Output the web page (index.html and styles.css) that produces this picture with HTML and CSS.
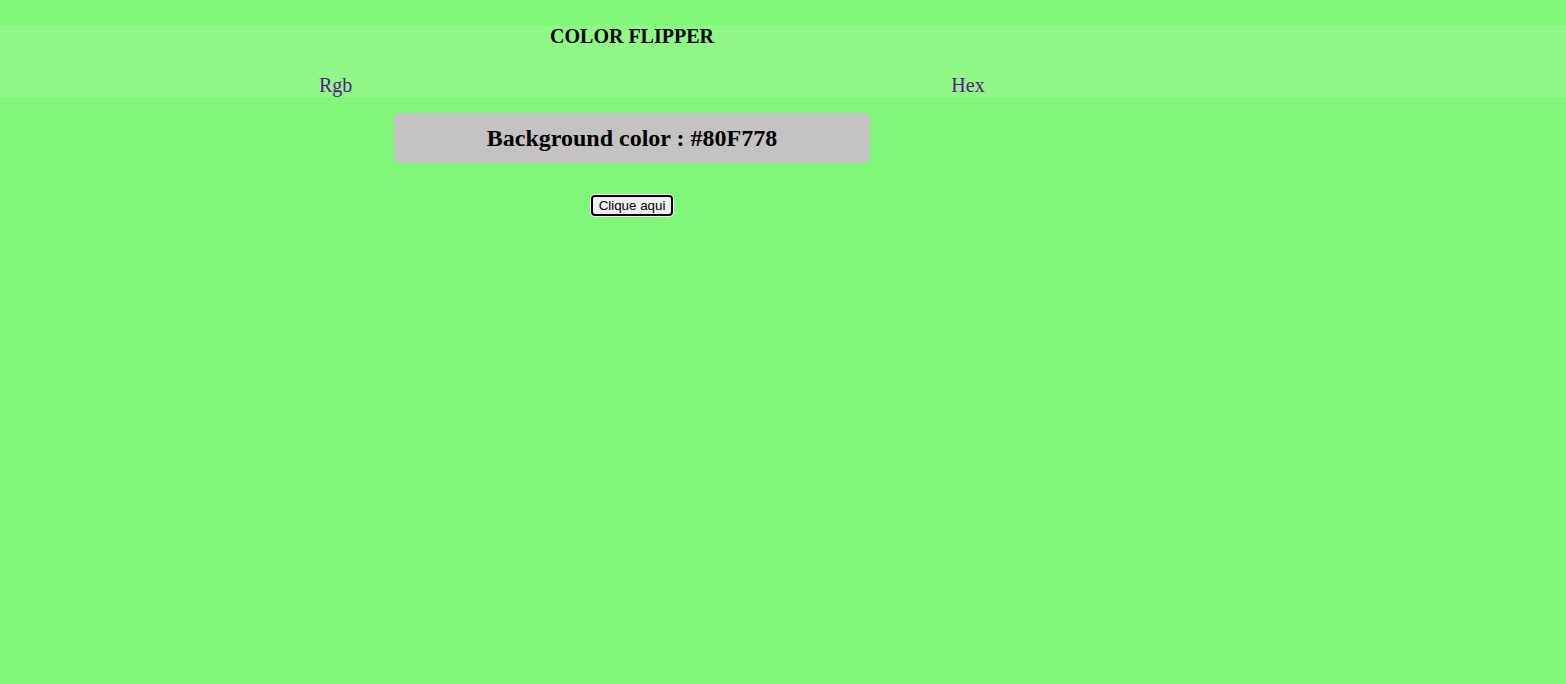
FILE: index.html
```html
<!DOCTYPE html>
<html lang="pt">
<head>
<meta charset="utf-8">
<title>Color Flipper</title>
<link rel="stylesheet" href="styles.css">
</head>
<body>
<header class="header">
  <h1 class="title">COLOR FLIPPER</h1>
  <nav class="nav">
    <a class="nav-link" href="#">Rgb</a>
    <a class="nav-link" href="#">Hex</a>
  </nav>
</header>
<main class="main">
  <div class="card">
    <h2 class="card-text">Background color : <span class="hex">#80F778</span></h2>
  </div>
  <div class="actions">
    <button class="btn" type="button">Clique aqui</button>
  </div>
</main>
</body>
</html>
```
FILE: styles.css
```css
html, body {
  margin: 0;
  padding: 0;
}
body {
  background: #80f778;
  font-family: "Liberation Serif", "Times New Roman", serif;
  min-height: 684px;
  padding-top: 25px;
  box-sizing: border-box;
}
.header {
  background: #8ff886;
  display: flex;
  flex-direction: column;
}
.title {
  width: 1264px;
  margin: 0;
  font-size: 20px;
  font-weight: bold;
  line-height: 23px;
  text-align: center;
  color: #000;
}
.nav {
  display: flex;
  gap: 599px;
  padding-left: 319px;
  margin-top: 26px;
}
.nav-link {
  font-size: 20px;
  line-height: 23px;
  color: #551a8b;
  text-decoration: none;
}
.main {
  width: 1264px;
  display: flex;
  flex-direction: column;
  align-items: center;
  padding-top: 16px;
}
.card {
  width: 476px;
  background: #c4c2c3;
  border-radius: 5px;
  padding: 11px 0;
}
.card-text {
  margin: 0;
  font-size: 24px;
  line-height: 28px;
  font-weight: bold;
  text-align: center;
  color: #000;
}
.actions {
  margin-top: 32px;
  display: flex;
  justify-content: center;
}
.btn {
  font-family: "Liberation Sans", Arial, sans-serif;
  font-size: 13.333px;
  line-height: 15px;
  padding: 1px 6px;
  border: 2px solid #000;
  border-radius: 4px;
  background: #efefef;
  color: #000;
  box-shadow: 0 0 0 1px #fff;
}
```
